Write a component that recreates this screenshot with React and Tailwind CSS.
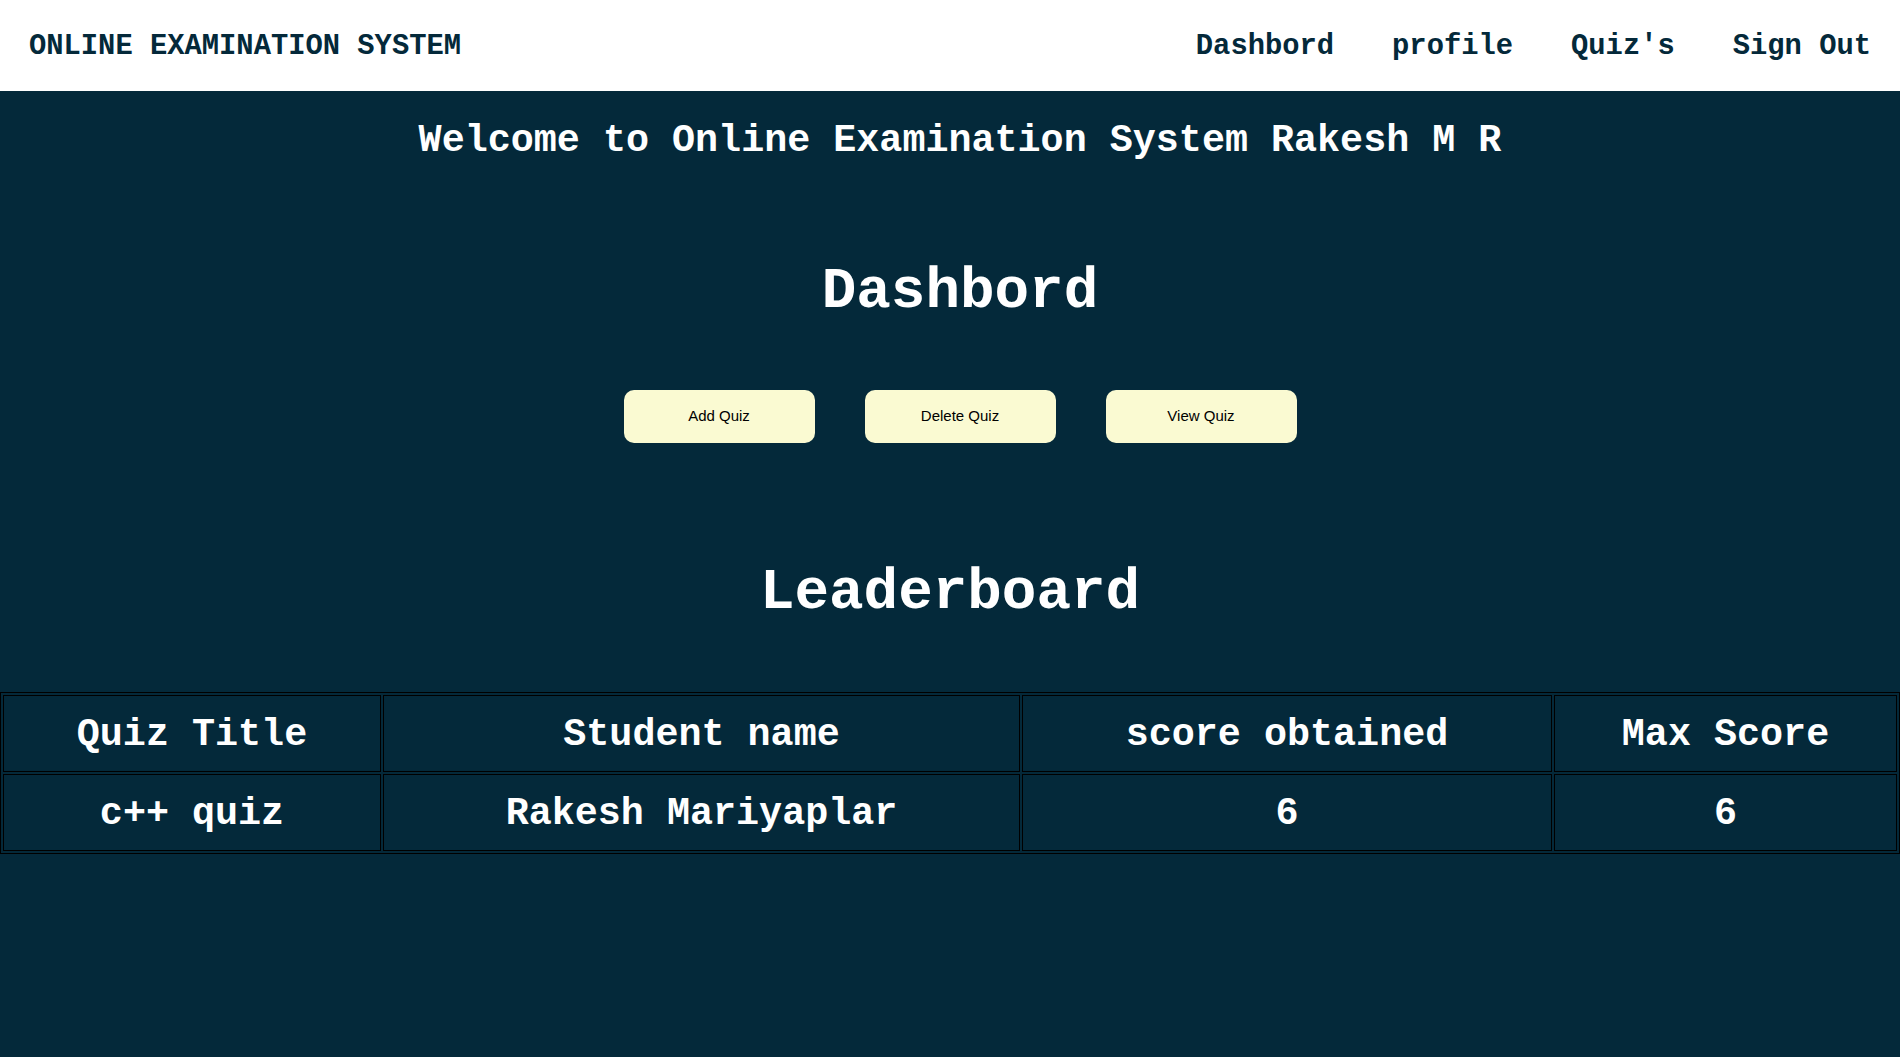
import React from 'react';

const mono = { fontFamily: '"Liberation Mono", "Courier New", monospace' };

const Navbar = () => {
  return (
    <div className="h-[91px] pt-[2px] bg-white flex items-center justify-between px-[29px] text-[#04293A] font-bold text-[28.8px]">
      <div>ONLINE EXAMINATION SYSTEM</div>
      <div className="flex gap-[58px]">
        {['Dashbord', 'profile', "Quiz's", 'Sign Out'].map((item) => (
          <a key={item} href="#" className="whitespace-pre">
            {item}
          </a>
        ))}
      </div>
    </div>
  );
};

const App = () => {
  const rows = [{ title: 'c++ quiz', name: 'Rakesh Mariyaplar', score: 6, max: 6 }];
  return (
    <div style={mono} className="min-h-screen bg-[#04293A] text-white">
      <Navbar />
      <div className="pl-5 text-center">
        <h2 className="mt-[31px] text-[38.4px] leading-[38px] font-bold whitespace-pre">
          Welcome to Online Examination System Rakesh M R
        </h2>
        <h1 className="mt-[103px] text-[57.6px] leading-[58px] font-bold">Dashbord</h1>
        <div className="mt-[69px] flex justify-center gap-[50px]">
          {['Add Quiz', 'Delete Quiz', 'View Quiz'].map((b) => (
            <button
              key={b}
              style={{ fontFamily: '"Liberation Sans", Arial, sans-serif' }}
              className="w-[191px] h-[53px] rounded-[10px] bg-[#FAFAD2] text-black text-[15px]"
            >
              {b}
            </button>
          ))}
        </div>
      </div>
      <h1 className="mt-[121px] text-center text-[57.6px] leading-[58px] font-bold">Leaderboard</h1>
      <table className="mt-[70px] w-full border border-black border-separate border-spacing-[2px] text-[38.4px] font-bold">
        <thead>
          <tr>
            <th className="w-[378px] h-[77px] pt-1 border border-black font-bold">Quiz Title</th>
            <th className="w-[637px] h-[77px] pt-1 border border-black font-bold">Student name</th>
            <th className="w-[530px] h-[77px] pt-1 border border-black font-bold">score obtained</th>
            <th className="h-[77px] pt-1 border border-black font-bold">Max Score</th>
          </tr>
        </thead>
        <tbody>
          {rows.map((r) => (
            <tr key={r.title}>
              <td className="h-[77px] pt-1 border border-black text-center">{r.title}</td>
              <td className="h-[77px] pt-1 border border-black text-center">{r.name}</td>
              <td className="h-[77px] pt-1 border border-black text-center">{r.score}</td>
              <td className="h-[77px] pt-1 border border-black text-center">{r.max}</td>
            </tr>
          ))}
        </tbody>
      </table>
    </div>
  );
};

export default App;
